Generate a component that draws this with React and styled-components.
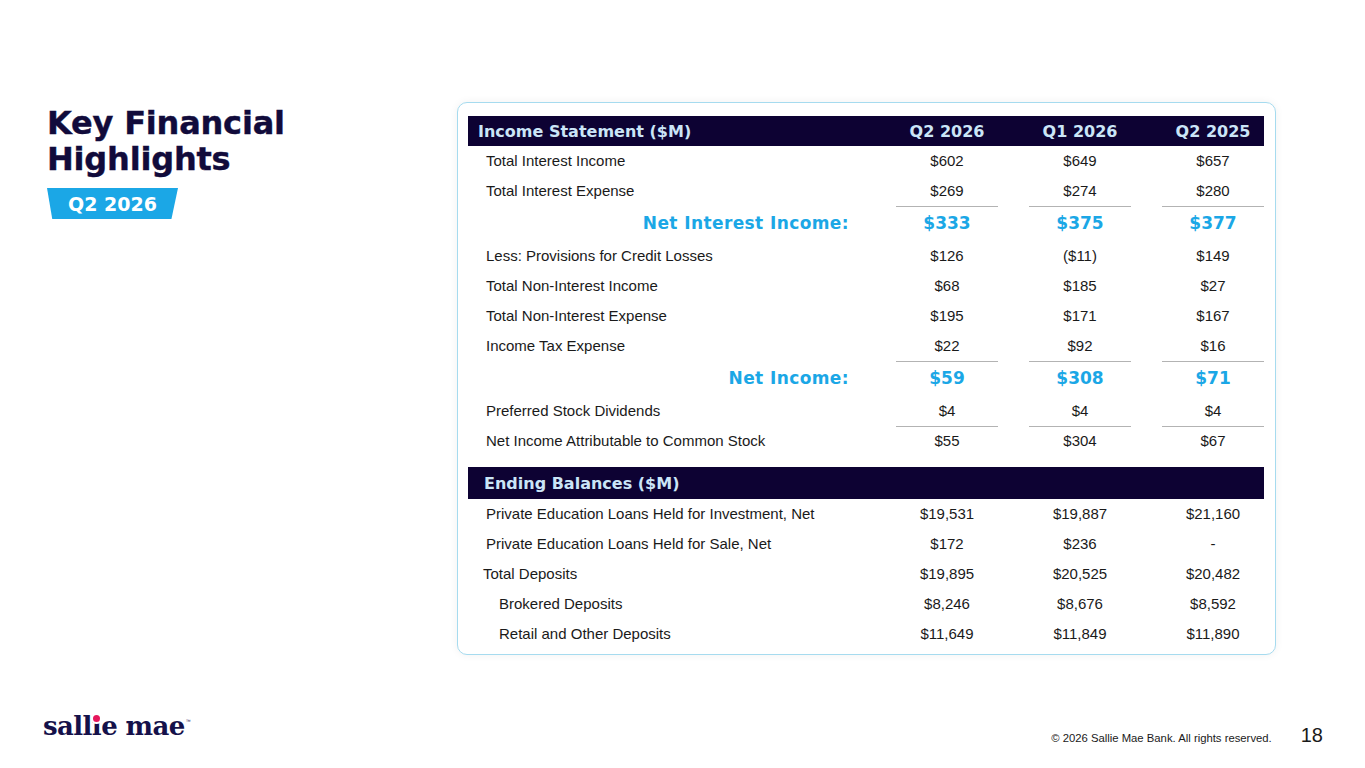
import styled, { createGlobalStyle } from "styled-components";

const NAVY = "#0d0233";
const CYAN = "#1ba7e6";

const GlobalStyle = createGlobalStyle`
  html, body {
    margin: 0;
    padding: 0;
    background: #ffffff;
  }
  body {
    font-family: "Liberation Sans", Arial, sans-serif;
    color: #1a1a1a;
  }
`;

const incomeRows = [
  { label: "Total Interest Income", values: ["$602", "$649", "$657"] },
  { label: "Total Interest Expense", values: ["$269", "$274", "$280"] },
  { label: "Net Interest Income:", values: ["$333", "$375", "$377"], total: true, rule: true },
  { label: "Less: Provisions for Credit Losses", values: ["$126", "($11)", "$149"] },
  { label: "Total Non-Interest Income", values: ["$68", "$185", "$27"] },
  { label: "Total Non-Interest Expense", values: ["$195", "$171", "$167"] },
  { label: "Income Tax Expense", values: ["$22", "$92", "$16"] },
  { label: "Net Income:", values: ["$59", "$308", "$71"], total: true, rule: true },
  { label: "Preferred Stock Dividends", values: ["$4", "$4", "$4"] },
  { label: "Net Income Attributable to Common Stock", values: ["$55", "$304", "$67"], rule: true }
];

const balanceRows = [
  { label: "Private Education Loans Held for Investment, Net", values: ["$19,531", "$19,887", "$21,160"] },
  { label: "Private Education Loans Held for Sale, Net", values: ["$172", "$236", "-"] },
  { label: "Total Deposits", values: ["$19,895", "$20,525", "$20,482"], indent: 15 },
  { label: "Brokered Deposits", values: ["$8,246", "$8,676", "$8,592"], indent: 31 },
  { label: "Retail and Other Deposits", values: ["$11,649", "$11,849", "$11,890"], indent: 31 }
];

const periods = ["Q2 2026", "Q1 2026", "Q2 2025"];

export default function App() {
  return (
    <>
      <GlobalStyle />
      <Page>
        <Main>
          <Intro>
            <Title>
              Key Financial
              <br />
              Highlights
            </Title>
            <Badge>Q2 2026</Badge>
          </Intro>

          <Card>
            <HeaderBar $height={30}>
              <HeaderLabel $pad={10}>Income Statement ($M)</HeaderLabel>
              {periods.map((p) => (
                <HeaderCell key={p}>{p}</HeaderCell>
              ))}
            </HeaderBar>
            {incomeRows.map((row) => (
              <Row key={row.label} $total={row.total}>
                <Label $total={row.total} $indent={row.indent ?? 18}>
                  {row.label}
                </Label>
                {row.values.map((v, i) => (
                  <Value key={i} $total={row.total} $rule={row.rule}>
                    {v}
                  </Value>
                ))}
              </Row>
            ))}

            <HeaderBar $height={32} $gap={11}>
              <HeaderLabel $pad={16}>Ending Balances ($M)</HeaderLabel>
            </HeaderBar>
            {balanceRows.map((row) => (
              <Row key={row.label}>
                <Label $indent={row.indent ?? 18}>{row.label}</Label>
                {row.values.map((v, i) => (
                  <Value key={i}>{v}</Value>
                ))}
              </Row>
            ))}
          </Card>
        </Main>

        <Footer>
          <Logo>
            sall<LogoI>i</LogoI>e mae<Tm>™</Tm>
          </Logo>
          <FooterRight>
            <Copyright>© 2026 Sallie Mae Bank. All rights reserved.</Copyright>
            <PageNum>18</PageNum>
          </FooterRight>
        </Footer>
      </Page>
    </>
  );
}

const Page = styled.div`
  width: 1365px;
  height: 768px;
  display: flex;
  flex-direction: column;
  overflow: hidden;
`;

const Main = styled.div`
  flex: 1;
  display: flex;
  padding: 102px 0 0 47px;
`;

const Intro = styled.div`
  width: 410px;
  display: flex;
  flex-direction: column;
  align-items: flex-start;
`;

const Title = styled.h1`
  margin: 3px 0 0;
  font-family: "DejaVu Sans", sans-serif;
  font-weight: 700;
  font-size: 32px;
  line-height: 36px;
  color: #110b3b;
  letter-spacing: -0.2px;
  -webkit-text-stroke: 0.4px #110b3b;
`;

const Badge = styled.div`
  margin-top: 11px;
  width: 131px;
  height: 31px;
  box-sizing: border-box;
  padding-left: 21px;
  display: flex;
  align-items: center;
  background: ${CYAN};
  clip-path: polygon(0 0, 100% 0, 95% 100%, 4% 100%);
  font-family: "DejaVu Sans", sans-serif;
  font-weight: 700;
  font-size: 19px;
  color: #ffffff;
`;

const Card = styled.div`
  width: 819px;
  height: 553px;
  box-sizing: border-box;
  padding: 13px 11px 6px 10px;
  border: 1px solid #a6dbef;
  border-radius: 10px;
  box-shadow: 0 0 8px rgba(0, 0, 0, 0.06);
  background: #ffffff;
`;

const Grid = styled.div`
  display: grid;
  grid-template-columns: 1fr 102px 102px 102px;
  column-gap: 31px;
  align-items: stretch;
`;

const HeaderBar = styled(Grid)`
  height: ${(p) => p.$height}px;
  margin-top: ${(p) => p.$gap || 0}px;
  background: ${NAVY};
  align-items: center;
  font-family: "DejaVu Sans", sans-serif;
  font-weight: 700;
  font-size: 16px;
  color: #cbe5f7;
`;

const HeaderLabel = styled.div`
  padding-left: ${(p) => p.$pad}px;
`;

const HeaderCell = styled.div`
  text-align: center;
`;

const Row = styled(Grid)`
  height: ${(p) => (p.$total ? 35 : 30)}px;
`;

const Label = styled.div`
  display: flex;
  align-items: center;
  justify-content: ${(p) => (p.$total ? "flex-end" : "flex-start")};
  padding-left: ${(p) => (p.$total ? 0 : p.$indent)}px;
  padding-right: ${(p) => (p.$total ? 16 : 0)}px;
  padding-bottom: 2px;
  font-family: ${(p) => (p.$total ? `"DejaVu Sans", sans-serif` : `"Liberation Sans", Arial, sans-serif`)};
  font-weight: ${(p) => (p.$total ? 700 : 400)};
  font-size: ${(p) => (p.$total ? 17 : 15)}px;
  letter-spacing: ${(p) => (p.$total ? "0.4px" : "0")};
  color: ${(p) => (p.$total ? CYAN : "#1a1a1a")};
`;

const Value = styled.div`
  display: flex;
  align-items: center;
  justify-content: center;
  padding-bottom: 2px;
  border-top: 1px solid ${(p) => (p.$rule ? "#b3b3b3" : "transparent")};
  font-family: ${(p) => (p.$total ? `"DejaVu Sans", sans-serif` : `"Liberation Sans", Arial, sans-serif`)};
  font-weight: ${(p) => (p.$total ? 700 : 400)};
  font-size: ${(p) => (p.$total ? 17 : 15)}px;
  color: ${(p) => (p.$total ? CYAN : "#1a1a1a")};
`;

const Footer = styled.div`
  height: 62px;
  display: flex;
  justify-content: space-between;
  align-items: flex-start;
  padding: 0 42px 0 43px;
`;

const Logo = styled.div`
  position: relative;
  font-family: "DejaVu Serif", serif;
  font-weight: 700;
  font-size: 26px;
  line-height: 30px;
  letter-spacing: -0.6px;
  color: #15114a;
`;

const LogoI = styled.span`
  position: relative;
  &::after {
    content: "";
    position: absolute;
    left: 50%;
    top: 4px;
    width: 7px;
    height: 7px;
    margin-left: -3.5px;
    border-radius: 50%;
    background: #e6175c;
    box-shadow: 0 0 0 2px #ffffff;
  }
`;

const Tm = styled.span`
  font-family: "Liberation Sans", Arial, sans-serif;
  font-weight: 400;
  font-size: 5px;
  vertical-align: 12px;
  margin-left: 1px;
`;

const FooterRight = styled.div`
  display: flex;
  align-items: baseline;
  gap: 29px;
  margin-top: 18px;
`;

const Copyright = styled.div`
  font-size: 11.3px;
  color: #1a1a1a;
`;

const PageNum = styled.div`
  font-size: 20px;
  color: #1a1a1a;
`;
